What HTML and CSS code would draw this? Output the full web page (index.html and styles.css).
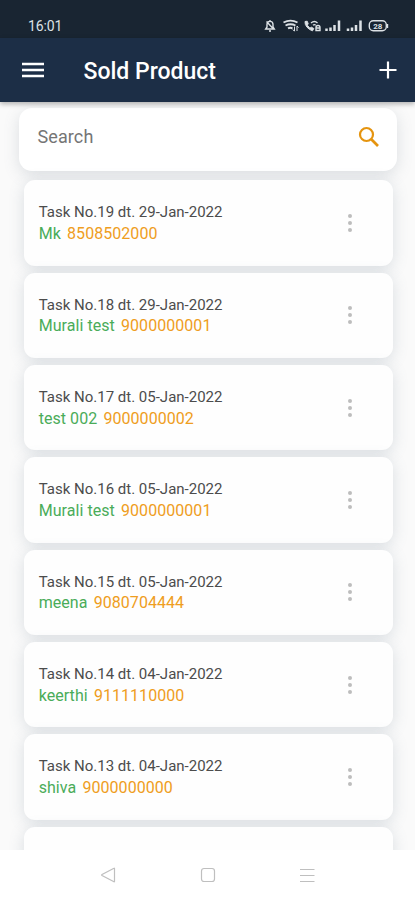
FILE: index.html
```html
<!DOCTYPE html>
<html lang="en">
<head>
<meta charset="utf-8">
<meta name="viewport" content="width=device-width, initial-scale=1">
<title>Sold Product</title>
<link rel="stylesheet" href="styles.css">
</head>
<body>
<div class="screen">
  <div class="status">
    <span class="time">16:01</span>
    <svg class="status-icons" width="128" height="16" viewBox="0 0 128 16" fill="none" stroke="#dce1e5" stroke-width="1.4">
      <path d="M3.700 11h8.600L11 9V6.500C11 4.500 10 3.400 8 3.400S5 4.500 5 6.500V9zM7 13h2M8 2v1.200M4.500 3.500l7 7.500"/>
      <path d="M21.500 4.500Q28.500 .8 35.500 4.500M23.500 7.500Q28.500 5 33.500 7.500M26 10.300Q28.500 9 30.500 10.500" stroke-width="1.900"/>
      <path d="M32.500 13V8.500M30.800 11.500l1.700 1.800M35 8v5M35 8l1.500 1.600" stroke-width="1"/>
      <path d="M43 3.500q-.3 3 2 5.700t5.500 3.600l1.300-2.300-2.500-1.300-1.400 1-2.600-3 .9-1.500-1-2.500z" fill="#dce1e5" stroke-width="1"/>
      <path d="M49 5q3.500-3 6.500 0M51 7.200q1.300-1.200 2.700 0" stroke-width="1.300"/>
      <path d="M54 12.500v-3q0-2 2-2t2 2v3zM54 10h4"/>
      <path d="M64.500 10.500v2.500M68.500 9.500v3.500M72.500 7v6M77 2.500V13M86 10.500v2.500M90 9.500v3.500M94 7v6M98.500 2.500V13" stroke-width="2.500"/>
      <rect x="107.300" y="2.800" width="17" height="10" rx="4"/>
      <path d="M125.500 6v4"/>
      <text x="115.800" y="11" text-anchor="middle" class="battery">28</text>
    </svg>
  </div>
  <header class="appbar">
    <svg class="menu" width="24" height="18" viewBox="0 0 24 18" stroke="#fff" stroke-width="2.300"><path d="M1 3h22M1 9h22M1 15h22"/></svg>
    <h1>Sold Product</h1>
    <svg class="add" width="18" height="18" viewBox="0 0 18 18" stroke="#fff" stroke-width="2.200"><path d="M.5 9h17M9 .5v17"/></svg>
  </header>
  <main class="content">
    <div class="search">
      <span>Search</span>
      <svg width="22" height="22" viewBox="0 0 22 22" fill="none" stroke="#e5940f"><circle cx="8.500" cy="8.500" r="6.500" stroke-width="2.200"/><path d="M13.300 13.300l6.700 6.700" stroke-width="2.700"/></svg>
    </div>
    <div class="list">
      <article class="card"><div><p class="task">Task No.19 dt. 29-Jan-2022</p><p class="contact"><span class="name">Mk</span><span class="phone">8508502000</span></p></div><div class="more"><i></i><i></i><i></i></div></article>
      <article class="card"><div><p class="task">Task No.18 dt. 29-Jan-2022</p><p class="contact"><span class="name">Murali test</span><span class="phone">9000000001</span></p></div><div class="more"><i></i><i></i><i></i></div></article>
      <article class="card"><div><p class="task">Task No.17 dt. 05-Jan-2022</p><p class="contact"><span class="name">test 002</span><span class="phone">9000000002</span></p></div><div class="more"><i></i><i></i><i></i></div></article>
      <article class="card"><div><p class="task">Task No.16 dt. 05-Jan-2022</p><p class="contact"><span class="name">Murali test</span><span class="phone">9000000001</span></p></div><div class="more"><i></i><i></i><i></i></div></article>
      <article class="card"><div><p class="task">Task No.15 dt. 05-Jan-2022</p><p class="contact"><span class="name">meena</span><span class="phone">9080704444</span></p></div><div class="more"><i></i><i></i><i></i></div></article>
      <article class="card"><div><p class="task">Task No.14 dt. 04-Jan-2022</p><p class="contact"><span class="name">keerthi</span><span class="phone">9111110000</span></p></div><div class="more"><i></i><i></i><i></i></div></article>
      <article class="card"><div><p class="task">Task No.13 dt. 04-Jan-2022</p><p class="contact"><span class="name">shiva</span><span class="phone">9000000000</span></p></div><div class="more"><i></i><i></i><i></i></div></article>
      <article class="card"></article>
    </div>
  </main>
  <nav class="navbar">
    <svg width="18" height="18" viewBox="0 0 18 18"><path d="M15.500 2.500v13Q15.500 16 15 15.700L3 9.500q-.8-.5 0-1L15 2.300q.5-.3.5.2z"/></svg>
    <svg width="18" height="18" viewBox="0 0 18 18"><rect x="2.500" y="2.500" width="13" height="13" rx="2.500"/></svg>
    <svg width="18" height="18" viewBox="0 0 18 18"><path d="M1 3.500h14.500M1 9.500h14.500M1 15.500h14.500"/></svg>
  </nav>
</div>
</body>
</html>
```
FILE: styles.css
```css
* { box-sizing: border-box; }
body { margin: 0; font-family: Roboto, sans-serif; background: #fff; }
p, h1 { margin: 0; }
svg { display: block; flex: none; }
.screen { display: flex; flex-direction: column; width: 415px; height: 900px; overflow: hidden; }
.status { display: flex; flex: none; justify-content: space-between; height: 38px; padding: 18px 25px 0 28px; background: #192532; color: #dce1e5; }
.time { font-size: 14px; line-height: 17px; letter-spacing: -.1px; }
.battery { font: 700 8px Roboto, sans-serif; fill: #dce1e5; stroke: none; }
.appbar { display: flex; flex: none; align-items: center; height: 64px; padding: 0 18px 0 21px; background: #1c2e46; color: #fff; box-shadow: 0 2px 5px rgba(0,0,0,.3); z-index: 1; }
.appbar h1 { margin-left: 38.500px; padding-top: 3px; font-size: 23px; line-height: 30px; font-weight: 500; white-space: nowrap; }
.add { margin-left: auto; }
.content { flex: 1; min-height: 0; overflow: hidden; padding: 6px 18px 0 19px; background: #fafafa; }
.search { display: flex; align-items: center; justify-content: space-between; height: 63px; padding: 0 17px 5px 18.500px; border-radius: 13px; background: #fff; box-shadow: 0 4px 16px rgba(100,115,130,.2); color: #757575; font-size: 18px; }
.search span { margin-top: -1px; letter-spacing: .1px; }
.list { display: flex; flex-direction: column; gap: 7px; padding: 9.300px 4.500px 0; }
.card { display: flex; flex: none; align-items: flex-start; justify-content: space-between; height: 85.360px; padding: 22px 41px 0 15.200px; border-radius: 11px; background: #fefefe; box-shadow: 0 3px 16px rgba(90,110,130,.2); }
.task { color: #4c4c4c; font-size: 15px; line-height: 20px; white-space: nowrap; }
.contact { display: flex; gap: 6.200px; padding-top: .7px; font-size: 16px; line-height: 22px; letter-spacing: .05px; white-space: nowrap; }
.name { color: #4aac59; }
.phone { color: #ef9d21; }
.more { display: flex; flex-direction: column; gap: 3px; padding-top: 11.500px; }
.more i { width: 4px; height: 4px; border-radius: 50%; background: #bdbdbd; }
.navbar { display: flex; flex: none; justify-content: center; gap: 82px; height: 50.500px; padding-top: 16.500px; background: #fff; }
.navbar svg { fill: none; stroke: #bfbfbf; stroke-width: 1.200; }
```
